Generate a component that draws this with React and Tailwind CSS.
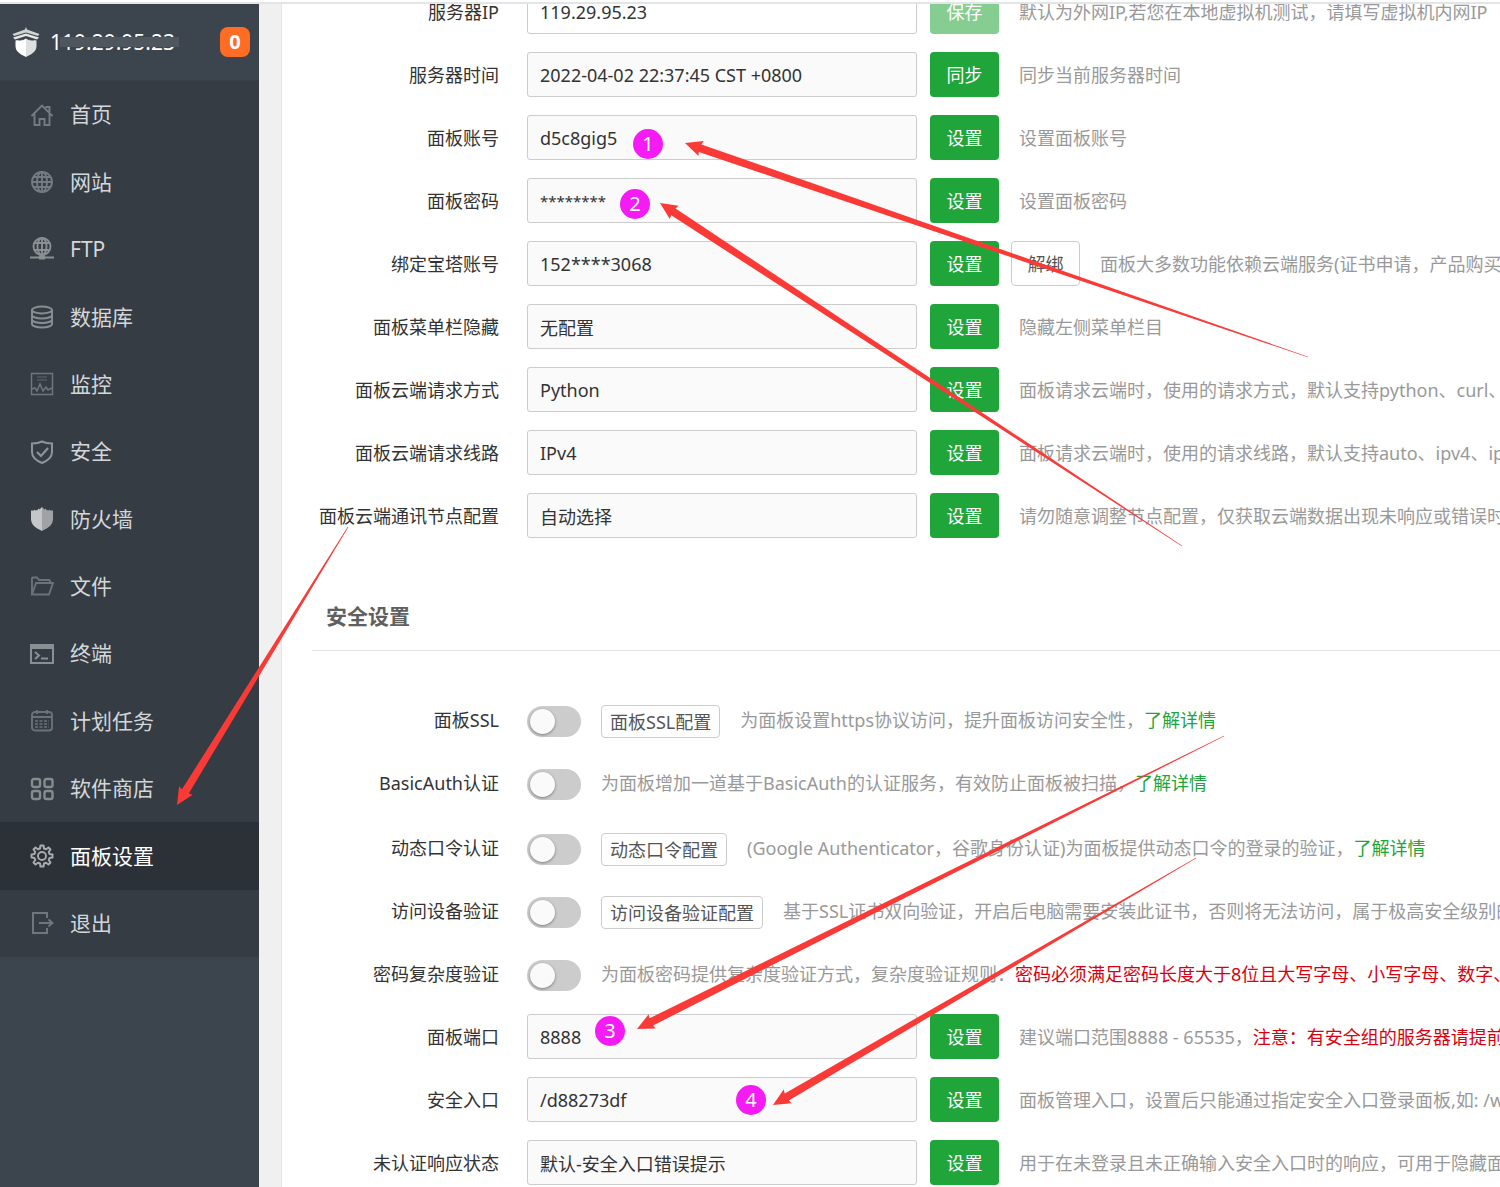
import React from "react";

const S = { fill: "none", stroke: "currentColor", strokeWidth: 1.9 };

function Icon({ children }) {
  return (
    <svg viewBox="0 0 24 24" className="size-6 shrink-0" aria-hidden="true" {...S}>
      {children}
    </svg>
  );
}

const icons = {
  home: (
    <Icon>
      <path d="M1.5 13 12 2.500 22.500 13M4.500 11v11h5v-6h5v6h5V11M15.500 4h4v5" />
    </Icon>
  ),
  globe: (
    <Icon>
      <circle cx="12" cy="12" r="10" />
      <ellipse cx="12" cy="12" rx="5" ry="10" />
      <path d="M12 2v20M2 12h20M4 7h16M4 17h16" />
    </Icon>
  ),
  ftp: (
    <Icon>
      <circle cx="12" cy="9.500" r="8.500" />
      <ellipse cx="12" cy="9.500" rx="4.500" ry="8.500" />
      <path d="M12 1v17M4.500 6h15M4.500 13h15" />
      <path d="M0 20.500h24" strokeWidth="2" />
      <path d="M9 20.500h6" strokeWidth="4" />
    </Icon>
  ),
  database: (
    <Icon>
      <ellipse cx="12" cy="5" rx="10" ry="3.500" />
      <path d="M2 5v14c0 2 4.500 3.500 10 3.500S22 21 22 19V5M2 10c0 2 4.500 3.500 10 3.500S22 12 22 10M2 14.500c0 2 4.500 3.500 10 3.500s10-1.500 10-3.500" />
    </Icon>
  ),
  monitor: (
    <Icon>
      <rect x="1.500" y="1.500" width="21" height="21" strokeWidth="1.500" />
      <path d="M2 17l3-1 2 3 3-7 3 7 3-4 2 3 4-2" strokeWidth="1.500" />
      <path d="M7 5h10M7 8h10" strokeWidth="1.500" opacity="0.500" />
    </Icon>
  ),
  shield: (
    <Icon>
      <path d="M12 1.500c3 1.500 6 2 10 2V12c0 5-4 8.500-10 11C6 20.500 2 17 2 12V3.500c4 0 7-.5 10-2z" strokeWidth="2" />
      <path d="M7 12l4 4 7-8" strokeWidth="2.200" />
    </Icon>
  ),
  firewall: (
    <Icon>
      <path d="M1 3.500h3l.5-1 1 1 2-.5 1-1.500 1 1L11 1l1-1v24C6 21 1 18 1 12z" fill="#c4c6c8" stroke="none" />
      <path d="M23 3.500h-3l-.5-1-1 1-2-.5-1-1.500-1 1L13 1l-1-1v24c6-3 11-6 11-12z" fill="#a0a3a6" stroke="none" />
    </Icon>
  ),
  folder: (
    <Icon>
      <path d="M2 20.500V4.500q0-1 1-1h4l2 2.500h10q1 0 1 1v2M2 20.500 6 9h17l-4 11.500z" />
    </Icon>
  ),
  terminal: (
    <Icon>
      <rect x="1" y="3" width="22" height="18" strokeWidth="2" />
      <path d="M1 5h22" strokeWidth="4" />
      <path d="M5 10l4 3.500-4 3.500M11 16.500h7" strokeWidth="2" />
    </Icon>
  ),
  calendar: (
    <Icon>
      <rect x="2" y="3" width="20" height="18.500" rx="3" />
      <path d="M7 1v4M17 1v4M2 8h20" />
      <path d="M5 12h14M5 15h14M5 18h14" strokeDasharray="3 1.500" strokeWidth="1.300" />
    </Icon>
  ),
  store: (
    <Icon>
      <g strokeWidth="2.400">
        <rect x="2" y="2" width="8" height="8" rx="2" />
        <rect x="14.500" y="2" width="8" height="8" rx="2" />
        <rect x="2" y="14" width="8" height="8" rx="2" />
        <rect x="14.500" y="14" width="8" height="8" rx="2" />
      </g>
    </Icon>
  ),
  gear: (
    <Icon>
      <circle cx="12" cy="12" r="4" />
      <path
        strokeWidth="2"
        strokeLinejoin="round"
        d="M10 4.500 10.500 1.500h3L14 4.500l2 .8 2.500-1.800 2 2L18.700 8l.8 2 3 .5v3l-3 .5-.8 2 1.800 2.500-2 2L16 18.700l-2 .8-.5 3h-3l-.5-3-2-.8-2.500 1.800-2-2L5.300 16l-.8-2-3-.5v-3l3-.5.8-2-1.800-2.500 2-2L8 5.300z"
      />
    </Icon>
  ),
  exit: (
    <Icon>
      <path d="M17 7V2H3v20h14v-5M9 12h13M18.500 8.500 22.500 12l-4 3.500" strokeWidth="2" />
    </Icon>
  ),
};

const menu = [
  ["首页", "home", "text-[#757b80]"],
  ["网站", "globe", "text-[#757b80]"],
  ["FTP", "ftp", "text-[#8a8f93]"],
  ["数据库", "database", "text-[#8a8f93]"],
  ["监控", "monitor", "text-[#70767b]"],
  ["安全", "shield", "text-[#8f9498]"],
  ["防火墙", "firewall", "text-[#b0b3b5]"],
  ["文件", "folder", "text-[#6c7277]"],
  ["终端", "terminal", "text-[#8a8f93]"],
  ["计划任务", "calendar", "text-[#6c7277]"],
  ["软件商店", "store", "text-[#868b8f]"],
  ["面板设置", "gear", "text-[#a9acae]"],
  ["退出", "exit", "text-[#70767b]"],
];

function Logo() {
  return (
    <svg viewBox="0 0 28 30" className="h-[30px] w-7 shrink-0" aria-hidden="true">
      <path d="M14 0 15 2.500 27.500 7l-1.500 2L14 5.500 2 9 .5 7 13 2.500z" fill="#d0d2d4" />
      <path d="M14 6.500 27 10.500l-2 2L14 9 3 12.500l-2-2z" fill="#e4e5e6" />
      <path d="M3.500 13.500l3-.5v1l2-1v1l2-1.500v1l3.500-2V30C7.500 27 3.500 24 3.500 19z" fill="#fff" />
      <path d="M24.500 13.500l-3-.5v1l-2-1v1l-2-1.500v1l-3.500-2V30c6.500-3 10.500-6 10.500-11z" fill="#dedfdf" />
    </svg>
  );
}

function Sidebar() {
  return (
    <aside className="w-[259px] shrink-0 bg-[#3c444d]">
      <div className="flex h-[77px] items-center border-b border-[#383f47] pl-3 pr-[9px] text-[21px] text-white">
        <Logo />
        <span className="relative ml-[10px]">
          119.29.95.23
          <span className="absolute -right-1 left-[10px] top-1/2 h-[10px] -translate-y-1/2 bg-[#50565d]" />
        </span>
        <span className="ml-auto flex size-[30px] items-center justify-center rounded-lg bg-[#ff6c23] text-xl font-bold">0</span>
      </div>
      <nav className="grid h-[876px] auto-rows-fr bg-[#353c43] text-[21px]">
        {menu.map(([name, icon, color]) => (
          <a
            key={name}
            href="#"
            aria-current={icon === "gear" ? "page" : undefined}
            className={
              icon === "gear"
                ? "flex items-center gap-4 bg-[#2c3138] pl-[30px] text-white"
                : "flex items-center gap-4 pl-[30px] text-[#d3d7da]"
            }
          >
            <span className={color}>{icons[icon]}</span>
            {name}
          </a>
        ))}
      </nav>
    </aside>
  );
}

function Row({ id, label, children }) {
  return (
    <div className="flex h-[45px] items-center whitespace-nowrap">
      <label htmlFor={id} className="mr-7 w-[217px] shrink-0 text-right text-[#333]">
        {label}
      </label>
      {children}
    </div>
  );
}

function Note({ children }) {
  return <p className="ml-5 text-[#999]">{children}</p>;
}

function FieldRow({ id, label, value, action = "设置", editable, masked, extra, note }) {
  return (
    <Row id={id} label={label}>
      <input
        id={id}
        defaultValue={value}
        readOnly={!editable}
        className={
          editable
            ? "h-[45px] w-[390px] shrink-0 rounded-[3px] border border-[#ccc] bg-white px-3 text-[#333]"
            : masked
              ? "h-[45px] w-[390px] shrink-0 rounded-[3px] border border-[#ccc] bg-[#fafafa] px-3 text-[15px] text-[#333]"
              : "h-[45px] w-[390px] shrink-0 rounded-[3px] border border-[#ccc] bg-[#fafafa] px-3 text-[#333]"
        }
      />
      <button
        className={
          editable
            ? "ml-[13px] h-[45px] w-[69px] shrink-0 rounded bg-[#86cd92] text-white"
            : "ml-[13px] h-[45px] w-[69px] shrink-0 rounded bg-[#20a53a] text-white"
        }
      >
        {action}
      </button>
      {extra && (
        <button className="ml-3 h-[45px] w-[69px] shrink-0 rounded border border-[#ccc] bg-white text-[#555]">{extra}</button>
      )}
      <Note>{note}</Note>
    </Row>
  );
}

function SwitchRow({ id, label, config, children }) {
  return (
    <Row id={id} label={label}>
      <input
        id={id}
        type="checkbox"
        role="switch"
        className="mt-1 h-[31px] w-[54px] shrink-0 appearance-none rounded-full bg-[#ccc] p-[3px] before:block before:size-[25px] before:rounded-full before:bg-[#fafafa] before:shadow-[0_1px_3px_rgba(0,0,0,0.4)] checked:bg-[#20a53a] checked:before:ml-auto"
      />
      {config && (
        <button className="ml-5 mt-1 h-[33px] shrink-0 rounded border border-[#ccc] bg-white px-2 text-[#555]">{config}</button>
      )}
      <Note>{children}</Note>
    </Row>
  );
}

function More() {
  return (
    <a href="#" className="text-[#20a53a]">
      了解详情
    </a>
  );
}

const fields = [
  { id: "ip", label: "服务器IP", value: "119.29.95.23", action: "保存", editable: true, note: "默认为外网IP,若您在本地虚拟机测试，请填写虚拟机内网IP" },
  { id: "time", label: "服务器时间", value: "2022-04-02 22:37:45 CST +0800", action: "同步", note: "同步当前服务器时间" },
  { id: "user", label: "面板账号", value: "d5c8gig5", note: "设置面板账号" },
  { id: "pass", label: "面板密码", value: "********", masked: true, note: "设置面板密码" },
  { id: "bind", label: "绑定宝塔账号", value: "152****3068", extra: "解绑", note: "面板大多数功能依赖云端服务(证书申请，产品购买" },
  { id: "hide", label: "面板菜单栏隐藏", value: "无配置", note: "隐藏左侧菜单栏目" },
  { id: "method", label: "面板云端请求方式", value: "Python", note: "面板请求云端时，使用的请求方式，默认支持python、curl、" },
  { id: "line", label: "面板云端请求线路", value: "IPv4", note: "面板请求云端时，使用的请求线路，默认支持auto、ipv4、ipv6" },
  { id: "node", label: "面板云端通讯节点配置", value: "自动选择", note: "请勿随意调整节点配置，仅获取云端数据出现未响应或错误时" },
];

function arrowPoints([tx, ty], [ex, ey]) {
  const len = Math.hypot(ex - tx, ey - ty);
  const dx = (ex - tx) / len;
  const dy = (ey - ty) / len;
  const at = (along, side) => `${tx + dx * along - dy * side},${ty + dy * along + dx * side}`;
  return [at(0, 0), at(17, 8), at(16, 4), at(len, 0.3), at(len, -0.3), at(16, -4), at(17, -8)].join(" ");
}

const arrows = [
  [[685, 143], [1308, 357]],
  [[660, 203], [1182, 546]],
  [[177, 805], [348, 527]],
  [[637, 1029], [1224, 736]],
  [[773, 1105], [1196, 858]],
];

const badges = [
  [648, 144],
  [635, 204],
  [610, 1031],
  [751, 1100],
];

function Annotations() {
  return (
    <svg className="pointer-events-none absolute left-0 top-0" width="1500" height="1187" aria-hidden="true">
      {arrows.map(([tip, tail], i) => (
        <polygon key={i} points={arrowPoints(tip, tail)} fill="#fa3a37" />
      ))}
      {badges.map(([x, y], i) => (
        <g key={i}>
          <circle cx={x} cy={y} r="15" fill="#f41bf4" />
          <text x={x} y={y + 7} textAnchor="middle" fontSize="20" fill="#fff">
            {i + 1}
          </text>
        </g>
      ))}
    </svg>
  );
}

export default function App() {
  return (
    <div className="relative flex h-screen flex-col overflow-hidden bg-white font-['Noto_Sans','Noto_Sans_CJK_SC',sans-serif] text-lg">
      <div className="h-1 shrink-0 border-b-2 border-[#e3e5e8]" />
      <div className="flex min-h-0 flex-1 bg-[#f0f0f0]">
        <Sidebar />
        <main className="ml-[22px] min-w-0 flex-1 overflow-hidden border-l border-[#e6e6e6] bg-white">
          <section className="-mt-[15px] flex flex-col gap-[18px]">
            {fields.map((f) => (
              <FieldRow key={f.id} {...f} />
            ))}
          </section>
          <section className="pt-14">
            <h2 className="ml-[30px] border-b border-[#e4e4e4] px-[14px] pb-3 text-[21px] font-bold leading-[44px] text-[#606060]">安全设置</h2>
            <div className="flex flex-col gap-5 pt-[46px]">
              <div className="flex flex-col gap-[18px]">
                <SwitchRow id="ssl" label="面板SSL" config="面板SSL配置">
                  为面板设置https协议访问，提升面板访问安全性，<More />
                </SwitchRow>
                <SwitchRow id="basic" label="BasicAuth认证">
                  为面板增加一道基于BasicAuth的认证服务，有效防止面板被扫描，<More />
                </SwitchRow>
              </div>
              <div className="flex flex-col gap-[18px]">
                <SwitchRow id="otp" label="动态口令认证" config="动态口令配置">
                  (Google Authenticator，谷歌身份认证)为面板提供动态口令的登录的验证，<More />
                </SwitchRow>
                <SwitchRow id="device" label="访问设备验证" config="访问设备验证配置">
                  基于SSL证书双向验证，开启后电脑需要安装此证书，否则将无法访问，属于极高安全级别的
                </SwitchRow>
                <SwitchRow id="complex" label="密码复杂度验证">
                  为面板密码提供复杂度验证方式，复杂度验证规则：
                  <span className="text-[#d9000f]">密码必须满足密码长度大于8位且大写字母、小写字母、数字、</span>
                </SwitchRow>
                <FieldRow
                  id="port"
                  label="面板端口"
                  value="8888"
                  note={
                    <>
                      建议端口范围8888 - 65535，<span className="text-[#d9000f]">注意：有安全组的服务器请提前</span>
                    </>
                  }
                />
                <FieldRow id="entry" label="安全入口" value="/d88273df" note="面板管理入口，设置后只能通过指定安全入口登录面板,如: /www" />
                <FieldRow id="status" label="未认证响应状态" value="默认-安全入口错误提示" note="用于在未登录且未正确输入安全入口时的响应，可用于隐藏面板" />
              </div>
            </div>
          </section>
        </main>
      </div>
      <Annotations />
    </div>
  );
}
